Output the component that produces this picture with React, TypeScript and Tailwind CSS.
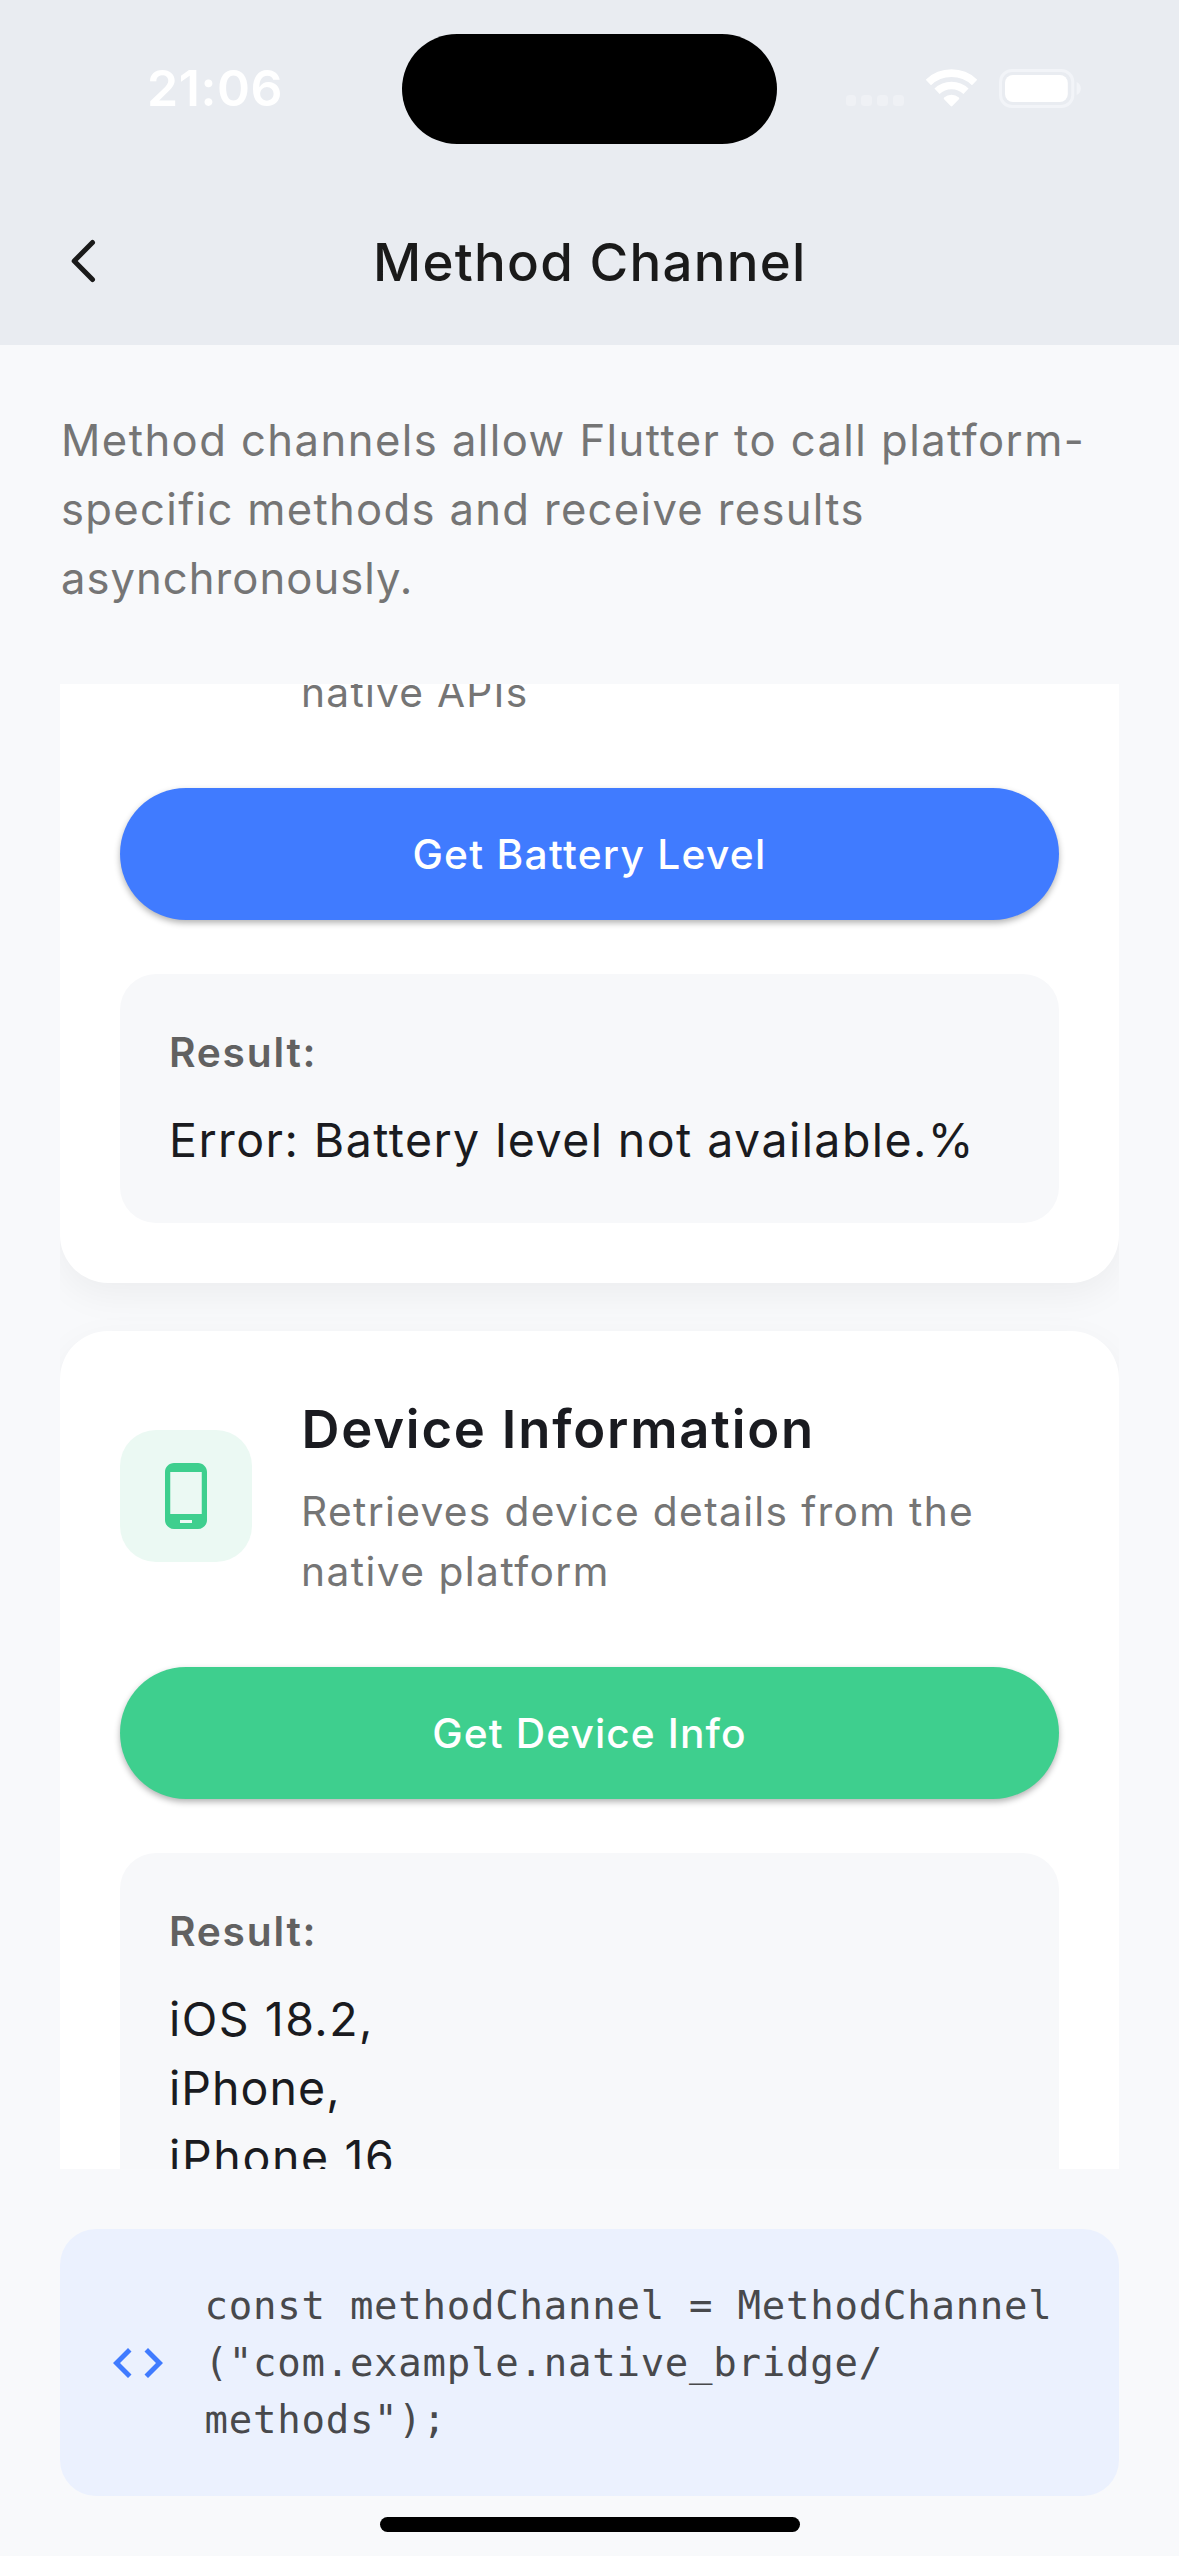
import type { ReactNode } from 'react';

function StatusBar() {
  return (
    <div className="flex h-[177px] items-center text-white">
      <div className="-mt-[2px] w-[402px] shrink-0 pl-[147px] text-[50px] leading-[60px] font-semibold tracking-[0.6px]">21:06</div>
      <div className="h-[110px] w-[375px] shrink-0 rounded-full bg-black" />
      <div className="-mt-px ml-[68.5px] flex items-center">
        <div className="mt-[25px] flex gap-[5.3px]">
          {[0, 1, 2, 3].map((dot) => (
            <span key={dot} className="h-[10.5px] w-[10.7px] rounded-[3.5px] bg-[#eff1f5]" />
          ))}
        </div>
        <svg className="ml-[22px] h-[38px] w-[51px]" viewBox="-25.5 -37.5 51 38" fill="none" stroke="white">
          <path d="M-23.1-24.1A33.5 33.5 0 0 1 23.1-24.1" strokeWidth="7.6" />
          <path d="M-14.5-15.2A21 21 0 0 1 14.5-15.2" strokeWidth="7.4" />
          <path
            d="M-.8-.4-7.4-7.3c-.5-.5-.5-1.2 0-1.7A11.2 11.2 0 0 1 7.4-9c.5.5.5 1.2 0 1.7L.8-.4a1.1 1.1 0 0 1-1.6 0Z"
            fill="white"
            stroke="none"
          />
        </svg>
        <svg className="ml-[22px] h-[39px] w-[82px]" viewBox="0 0 82 39" fill="none">
          <rect x="1.5" y="1.5" width="72.3" height="36" rx="11.5" stroke="#f2f4f8" strokeWidth="3" />
          <rect x="6" y="6" width="62.8" height="27" rx="8" fill="white" />
          <path d="M77.6 13c2.6 1 4.2 3.5 4.2 6.5s-1.6 5.5-4.2 6.5Z" fill="#f2f4f8" />
        </svg>
      </div>
    </div>
  );
}

function NavBar() {
  return (
    <div className="flex h-[168px] items-center pl-[70px]">
      <svg className="h-[44px] w-[27px]" viewBox="0 0 27 44" fill="none" stroke="#1a1a1a" strokeWidth="5" strokeLinecap="round" strokeLinejoin="round">
        <path d="M22.5 3.5 4.2 22 22.5 40.5" />
      </svg>
      <h1 className="mt-[2px] ml-[276px] text-[52.8px] leading-[72px] font-medium tracking-[1.27px] text-[#1a1a1a]">
        Method Channel
      </h1>
    </div>
  );
}

function ActionButton({ color, children }: { color: string; children: ReactNode }) {
  return (
    <button
      className={`mt-[66px] flex h-[132px] w-full items-center justify-center rounded-full pt-[2px] text-[40.7px] leading-[60px] font-medium text-white shadow-[0_3px_6px_rgba(0,0,0,0.3)] ${color}`}
    >
      {children}
    </button>
  );
}

function ResultBox({ children }: { children: ReactNode }) {
  return (
    <div className="mt-[54px] rounded-[36px] bg-[#f7f8fa] py-[48px] pr-[48px] pl-[49px]">
      <div className="text-[40.7px] leading-[62px] font-semibold tracking-[1.77px] text-[#616161]">Result:</div>
      <div className="mt-[22px] text-[46.5px] leading-[69px] text-[#1a1b20]">{children}</div>
    </div>
  );
}

function Card({ className, children }: { className: string; children: ReactNode }) {
  return (
    <section className={`bg-white px-[60px] pb-[60px] shadow-[0_12px_37px_rgba(0,0,0,0.05)] ${className}`}>
      {children}
    </section>
  );
}

export default function App() {
  return (
    <div className="flex h-[2556px] w-[1179px] flex-col overflow-hidden bg-[#f8f9fb] font-['Inter',sans-serif]">
      <header className="bg-[#e9ecf1]">
        <StatusBar />
        <NavBar />
      </header>

      <main className="flex flex-col px-[60px] pt-[61px]">
        <p className="flex flex-col pl-px text-[43.6px] leading-[69px] text-[#757575]">
          <span className="tracking-[1.44px]">Method channels allow Flutter to call platform-</span>
          <span className="tracking-[1.31px]">specific methods and receive results</span>
          <span className="tracking-[1.03px]">asynchronously.</span>
        </p>

        <div className="mt-[71px] h-[1485px] overflow-hidden">
          <Card className="-mt-[22.5px] rounded-b-[48px]">
            <p className="relative top-px pl-[181px] text-[40.7px] leading-[60px] tracking-[1.25px] text-[#757575]">
              native APIs
            </p>
            <ActionButton color="bg-[#407bff]">
              <span className="tracking-[1.28px]">Get Battery Level</span>
            </ActionButton>
            <ResultBox>
              <p className="tracking-[1.43px]">Error: Battery level not available.%</p>
            </ResultBox>
          </Card>

          <Card className="mt-[48px] rounded-[48px] pt-[60px]">
            <div className="flex items-center gap-[48px]">
              <div className="flex size-[132px] shrink-0 items-center justify-center rounded-[36px] bg-[#ebf9f3]">
                <svg className="size-[72px]" viewBox="0 0 24 24" fill="#3ecf8e">
                  <path d="M16 1H8C6.34 1 5 2.34 5 4v16c0 1.66 1.34 3 3 3h8c1.66 0 3-1.34 3-3V4c0-1.66-1.34-3-3-3zm-2 20h-4v-1h4v1zm3.25-3H6.75V4h10.5v14z" />
                </svg>
              </div>
              <div>
                <h2 className="pl-[1.5px] text-[52.6px] leading-[77px] font-semibold tracking-[1.8px] text-[#1a1b20]">
                  Device Information
                </h2>
                <p className="mt-[14px] -mb-px flex flex-col pl-px text-[40.7px] leading-[60px] text-[#757575]">
                  <span className="tracking-[1.34px]">Retrieves device details from the</span>
                  <span className="tracking-[1.45px]">native platform</span>
                </p>
              </div>
            </div>
            <ActionButton color="bg-[#3ecf8e]">
              <span className="tracking-[1.11px]">Get Device Info</span>
            </ActionButton>
            <ResultBox>
              <p className="tracking-[1.5px]">iOS 18.2,</p>
              <p className="tracking-[1.05px]">iPhone,</p>
              <p className="tracking-[1.65px]">iPhone 16</p>
            </ResultBox>
          </Card>
        </div>

        <div className="mt-[60px] flex h-[267px] items-center gap-[36px] rounded-[36px] bg-[#ebf1fe] px-[48px]">
          <svg className="size-[60px] shrink-0" viewBox="0 0 24 24" fill="#407bff">
            <path d="M9.4 16.6 4.8 12l4.6-4.6L8 6l-6 6 6 6 1.4-1.4zm5.2 0 4.6-4.6-4.6-4.6L16 6l6 6-6 6-1.4-1.4z" />
          </svg>
          <code className="flex flex-col pl-[0.5px] font-['DejaVu_Sans_Mono',monospace] text-[39px] leading-[57px] tracking-[0.75px] whitespace-nowrap text-[#48494c]">
            <span>const methodChannel = MethodChannel</span>
            <span>("com.example.native_bridge/</span>
            <span>methods");</span>
          </code>
        </div>
      </main>

      <div className="mt-[21px] h-[15px] w-[420px] self-center rounded-full bg-black" />
    </div>
  );
}
